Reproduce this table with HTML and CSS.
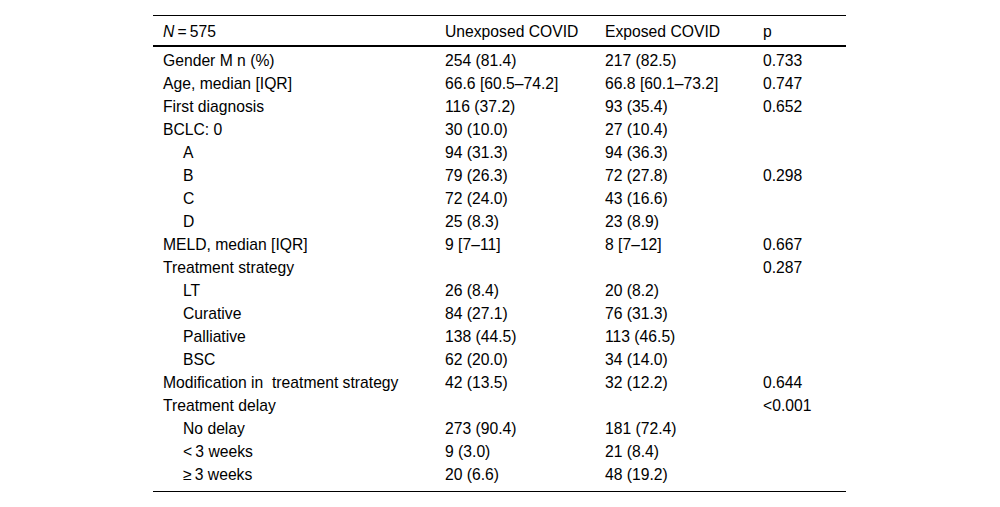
FILE: index.html
```html
<!DOCTYPE html>
<html>
<head>
<meta charset="utf-8">
<link rel="stylesheet" href="styles.css">
</head>
<body>
<table class="data">
  <colgroup>
    <col class="c1"><col class="c2"><col class="c3"><col class="c4">
  </colgroup>
  <thead>
    <tr><th><i>N</i>&#8201;=&#8201;575</th><th>Unexposed COVID</th><th>Exposed COVID</th><th>p</th></tr>
  </thead>
  <tbody>
    <tr class="first"><td>Gender M n (%)</td><td>254 (81.4)</td><td>217 (82.5)</td><td>0.733</td></tr>
    <tr><td>Age, median [IQR]</td><td>66.6 [60.5–74.2]</td><td>66.8 [60.1–73.2]</td><td>0.747</td></tr>
    <tr><td>First diagnosis</td><td>116 (37.2)</td><td>93 (35.4)</td><td>0.652</td></tr>
    <tr><td>BCLC: 0</td><td>30 (10.0)</td><td>27 (10.4)</td><td></td></tr>
    <tr><td class="sub">A</td><td>94 (31.3)</td><td>94 (36.3)</td><td></td></tr>
    <tr><td class="sub">B</td><td>79 (26.3)</td><td>72 (27.8)</td><td>0.298</td></tr>
    <tr><td class="sub">C</td><td>72 (24.0)</td><td>43 (16.6)</td><td></td></tr>
    <tr><td class="sub">D</td><td>25 (8.3)</td><td>23 (8.9)</td><td></td></tr>
    <tr><td>MELD, median [IQR]</td><td>9 [7–11]</td><td>8 [7–12]</td><td>0.667</td></tr>
    <tr><td>Treatment strategy</td><td></td><td></td><td>0.287</td></tr>
    <tr><td class="sub">LT</td><td>26 (8.4)</td><td>20 (8.2)</td><td></td></tr>
    <tr><td class="sub">Curative</td><td>84 (27.1)</td><td>76 (31.3)</td><td></td></tr>
    <tr><td class="sub">Palliative</td><td>138 (44.5)</td><td>113 (46.5)</td><td></td></tr>
    <tr><td class="sub">BSC</td><td>62 (20.0)</td><td>34 (14.0)</td><td></td></tr>
    <tr><td>Modification in&nbsp; treatment strategy</td><td>42 (13.5)</td><td>32 (12.2)</td><td>0.644</td></tr>
    <tr><td>Treatment delay</td><td></td><td></td><td>&lt;0.001</td></tr>
    <tr><td class="sub">No delay</td><td>273 (90.4)</td><td>181 (72.4)</td><td></td></tr>
    <tr><td class="sub">&lt;&#8201;3 weeks</td><td>9 (3.0)</td><td>21 (8.4)</td><td></td></tr>
    <tr class="last"><td class="sub">≥&#8201;3 weeks</td><td>20 (6.6)</td><td>48 (19.2)</td><td></td></tr>
  </tbody>
</table>
</body>
</html>
```
FILE: styles.css
```css
html, body {
  margin: 0;
  padding: 0;
  background: #fff;
}
body {
  font-family: "Liberation Sans", Arial, sans-serif;
  font-size: 15.7px;
  color: #000;
}
.data {
  border-collapse: collapse;
  table-layout: fixed;
  width: 693px;
  margin: 15px 0 0 153px;
}
.c1 { width: 282px; }
.c2 { width: 160px; }
.c3 { width: 158px; }
.c4 { width: 93px; }
.data th,
.data td {
  text-align: left;
  font-weight: normal;
  line-height: 23px;
  padding: 0 10px;
  white-space: nowrap;
  vertical-align: top;
}
.data thead th {
  padding-top: 4px;
  padding-bottom: 2px;
  border-top: 1px solid #000;
  border-bottom: 2px solid #000;
}
.data tr.first td { padding-top: 2px; }
.data tr.last td {
  padding-bottom: 5px;
  border-bottom: 1px solid #000;
}
.data td.sub { padding-left: 30px; }
```
